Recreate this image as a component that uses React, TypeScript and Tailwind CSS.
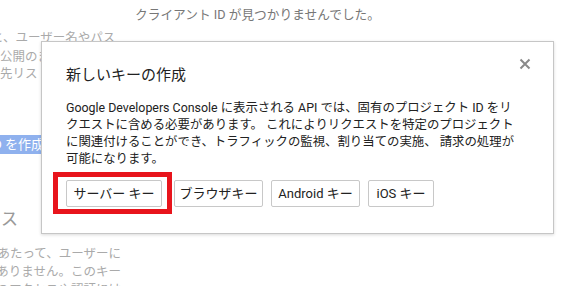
import React from "react";

const jp = { fontFamily: 'Roboto, Arial, "Noto Sans CJK JP", sans-serif' };

function KeyButton({ label, className = "" }: { label: string; className?: string }) {
  return (
    <button
      className={`h-[27px] rounded-[2px] border border-[#c8c8c8] bg-white text-[13px] text-[#222] leading-none whitespace-nowrap ${className}`}
    >
      {label}
    </button>
  );
}

export default function App() {
  return (
    <div className="relative w-[583px] h-[286px] overflow-hidden bg-white" style={jp}>
      {/* page behind the dialog */}
      <div className="flex flex-col">
        <div className="h-[29px] flex items-center justify-center text-[12.7px] text-[#777] pt-[1px] pr-[68px]">
          クライアント ID が見つかりませんでした。
        </div>
        <div className="flex flex-col text-[12.5px] text-[#aaa] leading-[17px] whitespace-nowrap">
          <div className="ml-[-9px]">と、ユーザー名やパス</div>
          <div className="mt-[2px]">公開のままにしない</div>
          <div>先リストを指定して</div>
        </div>
        <div className="mt-[53px] w-[44px] h-[19px] bg-[#8fb1ee] text-white text-[13px] flex items-center justify-end whitespace-nowrap overflow-hidden">
          D を作成
        </div>
        <div className="mt-[57px] w-[18px] flex justify-end text-[17px] text-[#999] leading-none whitespace-nowrap overflow-hidden">
          セス
        </div>
        <div className="mt-[17px] w-[121px] flex flex-col items-end text-[12.5px] text-[#aaa] leading-[18px] whitespace-nowrap overflow-hidden">
          <div>あたって、ユーザーに</div>
          <div>ありません。このキー</div>
          <div>のアクセスや認証には</div>
        </div>
      </div>

      {/* dialog */}
      <div className="absolute left-[41px] top-[41px] w-[513px] h-[193px] bg-white border border-[#c6c6c6] shadow-[0_1px_3px_rgba(0,0,0,0.15)] pl-[24px] pr-[20px]">
        <div className="flex items-start justify-between">
          <div className="mt-[24px] text-[15px] text-[#222] leading-[18px]">新しいキーの作成</div>
          <div className="mt-[16px] mr-[2px]">
            <svg width="12" height="12" viewBox="0 0 12 12">
              <path d="M1.5 1.5 L10.5 10.5 M10.5 1.5 L1.5 10.5" stroke="#8a8a8a" strokeWidth="2" />
            </svg>
          </div>
        </div>
        <p className="mt-[15px] text-[12.4px] text-[#222] leading-[17px] whitespace-nowrap">
          Google Developers Console に表示される API では、固有のプロジェクト ID をリ
          <br />
          クエストに含める必要があります。 これによりリクエストを特定のプロジェクト
          <br />
          に関連付けることができ、トラフィックの監視、割り当ての実施、 請求の処理が
          <br />
          可能になります。
        </p>
        <div className="mt-[13px] flex gap-[8px]">
          <div className="relative mr-[4px]">
            <KeyButton label="サーバー キー" className="w-[96px]" />
            <div className="absolute left-[-13px] top-[-8px] w-[119px] h-[42px] border-[5px] border-[#e8141c] pointer-events-none" />
          </div>
          <KeyButton label="ブラウザキー" className="w-[89px]" />
          <KeyButton label="Android キー" className="w-[89px]" />
          <KeyButton label="iOS キー" className="w-[66px]" />
        </div>
      </div>
    </div>
  );
}
